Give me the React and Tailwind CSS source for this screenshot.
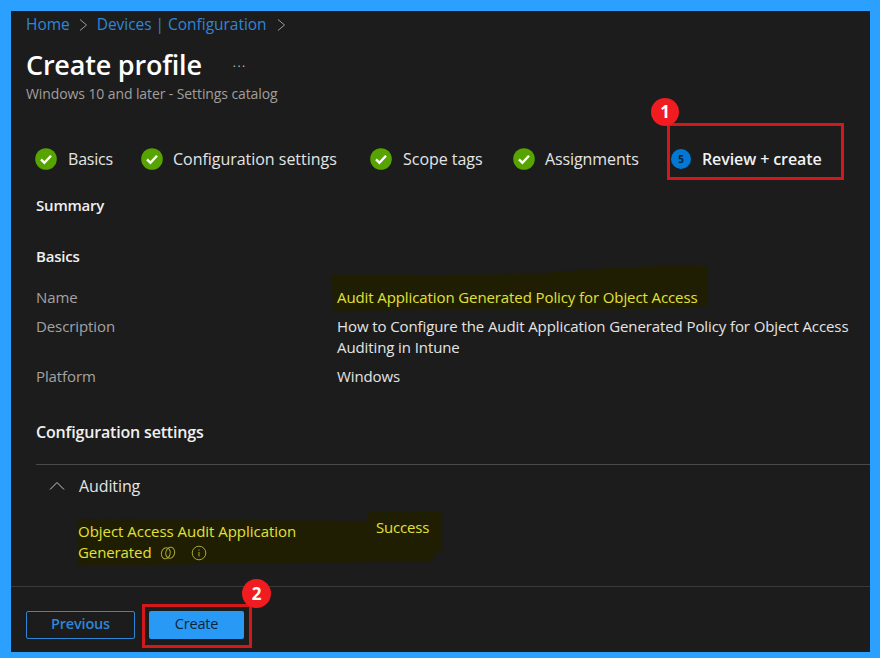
import React from "react";

function Check() {
  return (
    <svg width="22" height="22" viewBox="0 0 22 22" className="shrink-0">
      <circle cx="11" cy="11" r="10.8" fill="#57a300" />
      <path d="M6 11.4 9.4 14.8 16 7.8" fill="none" stroke="#fff" strokeWidth="2.4" />
    </svg>
  );
}

function Step({ label, className, textClass }) {
  return (
    <div className={"flex items-center " + className}>
      <Check />
      <span className={"text-[16px] text-[#e4e4e4] " + textClass}>{label}</span>
    </div>
  );
}

function Chevron() {
  return (
    <svg width="9" height="14" viewBox="0 0 9 14" className="shrink-0">
      <path d="M1 1.5 7.5 7 1 12.5" fill="none" stroke="#9a9a9a" strokeWidth="1" />
    </svg>
  );
}

export default function App() {
  return (
    <div className="w-[880px] h-[658px] bg-[#2ba0ff] pl-[11px] pr-[10px] pt-[11px] pb-[6px] font-['Open_Sans','Noto_Sans',sans-serif] overflow-hidden">
      <div className="relative w-full h-full bg-[#1c1c1c] flex flex-col overflow-hidden">
        {/* Breadcrumb */}
        <div className="h-[28px] pl-[15px] flex items-center text-[15.5px] tracking-[-0.03px] text-[#2f86d6]">
          <span>Home</span>
          <span className="mx-[9px]"><Chevron /></span>
          <span>Devices | Configuration</span>
          <span className="ml-[10px]"><Chevron /></span>
        </div>

        {/* Title */}
        <div className="h-[44px] mt-[4px] pl-[15px] flex items-center">
          <span className="text-[27px] font-semibold text-white tracking-[-0.2px]">Create profile</span>
          <span className="ml-[31px] mb-[4px] text-[12px] text-[#bdbdbd] tracking-[1.5px]">...</span>
        </div>
        <div className="h-[18px] -mt-[3px] pl-[15px] flex items-center text-[14px] tracking-[-0.1px] text-[#a19f9d]">
          Windows 10 and later - Settings catalog
        </div>

        {/* Steps */}
        <div className="h-[26px] mt-[44px] pl-[24px] flex items-center">
          <Step label="Basics" className="w-[106px] gap-[11px]" textClass="tracking-[-0.2px]" />
          <Step label="Configuration settings" className="w-[229px] gap-[10px]" textClass="tracking-[-0.03px]" />
          <Step label="Scope tags" className="w-[143px] gap-[11px]" textClass="tracking-[-0.03px]" />
          <Step label="Assignments" className="w-[158px] gap-[10px]" textClass="tracking-[-0.1px]" />
          <div className="flex items-center gap-[11px]">
            <span className="w-[20px] h-[20px] rounded-full bg-[#0078d4] flex items-center justify-center text-[10px] font-bold text-[#0b2036]">5</span>
            <span className="text-[16px] font-semibold text-[#f2f2f2] tracking-[-0.1px]">Review + create</span>
          </div>
        </div>

        {/* Summary */}
        <div className="px-[25px] mt-[21px] h-[24px] flex items-center text-[15px] font-semibold text-[#f0f0f0] tracking-[-0.2px]">Summary</div>
        <div className="px-[25px] mt-[27px] h-[24px] flex items-center text-[15px] font-semibold text-[#f0f0f0] tracking-[-0.2px]">Basics</div>

        <div className="relative mt-[19px] pl-[25px] grid grid-cols-[301px_1fr] text-[15px] tracking-[-0.1px] leading-[21px]">
          <span className="h-[21px] text-[#a3a3a3]">Name</span>
          <span className="relative h-[21px] text-[#e1e13a]">
            <svg width="380" height="50" viewBox="0 0 380 50" className="absolute left-[-6px] top-[-23px]">
              <path d="M0 11 C60 10 170 13 240 7 C290 2 340 1 376 2 L376 42 C300 47 240 44 150 45 L3 47 Z" fill="#1f1e02" />
            </svg>
            <span className="relative">Audit Application Generated Policy for Object Access</span>
          </span>
          <span className="mt-[8px] text-[#a3a3a3]">Description</span>
          <span className="mt-[8px] h-[42px] text-[#e4e4e4] relative">How to Configure the Audit Application Generated Policy for Object Access Auditing in Intune</span>
          <span className="mt-[8px] text-[#a3a3a3]">Platform</span>
          <span className="mt-[8px] text-[#e4e4e4]">Windows</span>
        </div>

        <div className="px-[25px] mt-[33px] h-[24px] flex items-center text-[16px] font-semibold text-[#f0f0f0] tracking-[-0.17px]">Configuration settings</div>

        <div className="ml-[25px] mt-[20px] border-t border-[#4a4a4a] h-[43px] flex items-center pl-[13px] gap-[14px]">
          <svg width="16" height="10" viewBox="0 0 16 10"><path d="M1 8.5 8 1.5 15 8.5" fill="none" stroke="#c8c8c8" strokeWidth="1" /></svg>
          <span className="text-[16px] text-[#e4e4e4] tracking-[-0.1px]">Auditing</span>
        </div>

        {/* Highlighted row */}
        <div className="relative ml-[67px] mt-[14px] h-[48px] grid grid-cols-[298px_1fr] text-[15px] tracking-[-0.03px] leading-[21px] text-[#e1e13a]">
          <svg width="370" height="56" viewBox="0 0 370 56" className="absolute left-[-2px] top-[-9px]">
            <path d="M1 7 L290 9 L293 0 L366 0 L366 40 L358 41 L358 50 L200 51 L1 54 Z" fill="#1f1e02" />
          </svg>
          <div className="relative">
            <div>Object Access Audit Application</div>
            <div className="flex items-center">
              <span className="tracking-[-0.1px]">Generated</span>
              <svg width="16" height="16" viewBox="0 0 16 16" className="ml-[9px]" fill="none" stroke="#a8a83a" strokeWidth="1">
                <ellipse cx="5.8" cy="8.3" rx="4.4" ry="5.6" transform="rotate(14 5.8 8.3)" />
                <ellipse cx="10.2" cy="7.7" rx="4.4" ry="5.6" transform="rotate(14 10.2 7.7)" />
              </svg>
              <svg width="16" height="16" viewBox="0 0 16 16" className="ml-[15px]" fill="none" stroke="#a8a83a" strokeWidth="1">
                <circle cx="8" cy="8" r="6.8" />
                <path d="M8 7v4.5M8 4.5v1.2" />
              </svg>
            </div>
          </div>
          <span className="relative -mt-[4px] tracking-[-0.2px]">Success</span>
        </div>

        {/* Footer */}
        <div className="mt-auto h-[66px] border-t border-[#3a3a3a] pl-[15px] pt-[24px] flex items-start gap-[14px]">
          <button className="w-[109px] h-[28px] pb-[2px] rounded-[2px] border border-[#2f86d6] text-[14.5px] font-semibold tracking-[-0.2px] text-[#2f86d6] flex items-center justify-center">Previous</button>
          <button className="w-[95px] h-[28px] pb-[2px] rounded-[2px] bg-[#2899f5] text-[14.5px] tracking-[-0.2px] text-[#11253a] flex items-center justify-center">Create</button>
        </div>

        {/* Annotations */}
        <div className="absolute left-[656px] top-[112px] w-[177px] h-[57px] border-[3px] border-[#d3181c]" />
        <div className="absolute left-[640px] top-[87px] w-[28px] h-[28px] rounded-full bg-[#f01c20] flex items-center justify-center text-[17px] font-bold text-white">1</div>
        <div className="absolute left-[131px] top-[593px] w-[110px] h-[44px] border-[3px] border-[#d3181c]" />
        <div className="absolute left-[231px] top-[568px] w-[29px] h-[29px] rounded-full bg-[#f01c20] flex items-center justify-center text-[17px] font-bold text-white">2</div>
      </div>
    </div>
  );
}
